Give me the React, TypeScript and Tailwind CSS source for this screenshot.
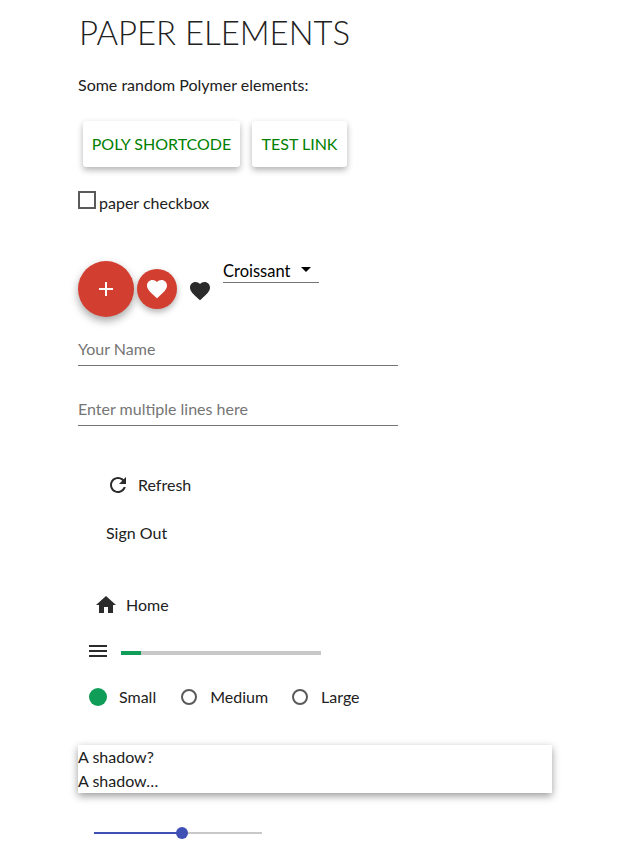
const Icon = ({ d, className }: { d: string; className: string }) => (
  <svg viewBox="0 0 24 24" className={className} fill="currentColor">
    <path d={d} />
  </svg>
)

const heart = "M12 21.35l-1.45-1.32C5.4 15.36 2 12.28 2 8.5 2 5.42 4.42 3 7.5 3c1.74 0 3.41.81 4.5 2.09C13.09 3.81 14.76 3 16.5 3 19.58 3 22 5.42 22 8.5c0 3.78-3.4 6.86-8.55 11.54L12 21.35z"
const refresh = "M17.65 6.35C16.2 4.9 14.21 4 12 4c-4.42 0-7.99 3.58-7.99 8s3.57 8 7.99 8c3.73 0 6.84-2.55 7.73-6h-2.08c-.82 2.33-3.04 4-5.65 4-3.31 0-6-2.69-6-6s2.69-6 6-6c1.66 0 3.14.69 4.22 1.78L13 11h7V4l-2.35 2.35z"
const home = "M10 20v-6h4v6h5v-8h3L12 3 2 12h3v8z"
const menu = "M3 18h18v-2H3v2zm0-5h18v-2H3v2zm0-7v2h18V6H3z"
const add = "M19 13h-6v6h-2v-6H5v-2h6V5h2v6h6v2z"

const Radio = ({ label, checked }: { label: string; checked?: boolean }) => (
  <div className="flex items-center">
    {checked ? (
      <div className="h-[18px] w-[18px] rounded-full bg-[#0f9d58]" />
    ) : (
      <div className="h-4 w-4 rounded-full border-2 border-[#5a5a5a]" />
    )}
    <span className={checked ? "ml-3 mr-[25px]" : "ml-[13px] mr-6"}>{label}</span>
  </div>
)

const App = () => {
  return (
    <div className="h-[850px] overflow-hidden bg-white pl-[78px] font-['Lato',sans-serif] text-base text-[#212121]">
      <h1 className="pl-px pt-[13px] text-[32.9px] leading-10 font-light uppercase">Paper Elements</h1>
      <p className="mt-5 leading-6">Some random Polymer elements:</p>

      <div className="mt-6 flex gap-3 pl-[5px]">
        <a className="flex h-[46px] w-[157px] items-center justify-center rounded-[3px] bg-white text-[#008000] shadow-[0_3px_6px_rgba(0,0,0,0.3)]">POLY SHORTCODE</a>
        <a className="flex h-[46px] w-[95px] items-center justify-center rounded-[3px] bg-white text-[#008000] shadow-[0_3px_6px_rgba(0,0,0,0.3)]">TEST LINK</a>
      </div>

      <div className="mt-6 flex h-6 items-start">
        <div className="h-[18px] w-[18px] border-2 border-[#5a5a5a]" />
        <span className="ml-[3px] leading-6">paper checkbox</span>
      </div>

      <div className="mt-[46px] flex items-start">
        <div className="flex h-14 w-14 items-center justify-center rounded-full bg-[#d23f31] text-white shadow-[0_4px_8px_rgba(0,0,0,0.35)]">
          <Icon d={add} className="h-6 w-6" />
        </div>
        <div className="mt-2 ml-[3px] flex h-10 w-10 items-center justify-center rounded-full bg-[#d23f31] text-white shadow-[0_3px_6px_rgba(0,0,0,0.3)]">
          <Icon d={heart} className="h-6 w-6" />
        </div>
        <Icon d={heart} className="mt-[18px] ml-[11px] h-6 w-6 text-[#2b2b2b]" />
        <div className="mt-[1px] ml-[11px] flex h-[21px] w-24 items-start border-b border-[#757575] text-black">
          <span className="-mt-px text-[16.5px] leading-5">Croissant</span>
          <div className="mt-[5px] ml-[11px] h-0 w-0 border-x-[5px] border-t-[5px] border-x-transparent border-t-black" />
        </div>
      </div>

      <div className="mt-5 flex h-[29px] w-80 items-center border-b border-[#757575] pb-1 text-[#757575]">Your Name</div>
      <div className="mt-[31px] flex h-[29px] w-80 items-center border-b border-[#757575] pb-1 text-[#757575]">Enter multiple lines here</div>

      <div className="mt-[47px] flex items-center pl-[28px] leading-6">
        <Icon d={refresh} className="h-6 w-6 text-[#2b2b2b]" />
        <span className="ml-2">Refresh</span>
      </div>
      <div className="mt-6 pl-[28px] leading-6">Sign Out</div>

      <div className="mt-12 flex items-center pl-4 leading-6">
        <Icon d={home} className="h-6 w-6 text-[#2b2b2b]" />
        <span className="ml-2">Home</span>
      </div>

      <div className="mt-[22px] flex h-6 items-center pl-2">
        <Icon d={menu} className="h-6 w-6 text-[#2b2b2b]" />
        <div className="mt-1 ml-[11px] h-1 w-[200px] bg-[#c8c8c8]">
          <div className="h-1 w-5 bg-[#0f9d58]" />
        </div>
      </div>

      <div className="mt-[22px] flex h-6 items-center pl-[11px]">
        <Radio label="Small" checked />
        <Radio label="Medium" />
        <Radio label="Large" />
      </div>

      <div className="mt-9 w-[474px] bg-white leading-6 shadow-[0_3px_8px_rgba(0,0,0,0.4)]">
        <div>A shadow?</div>
        <div>A shadow…</div>
      </div>

      <div className="relative mt-[39px] ml-4 h-[2px] w-[168px] bg-[#c8c8c8]">
        <div className="h-[2px] w-[88px] bg-[#3f51b5]" />
        <div className="absolute top-[-5px] left-[82px] h-3 w-3 rounded-full bg-[#3f51b5]" />
      </div>
    </div>
  )
}

export default App
